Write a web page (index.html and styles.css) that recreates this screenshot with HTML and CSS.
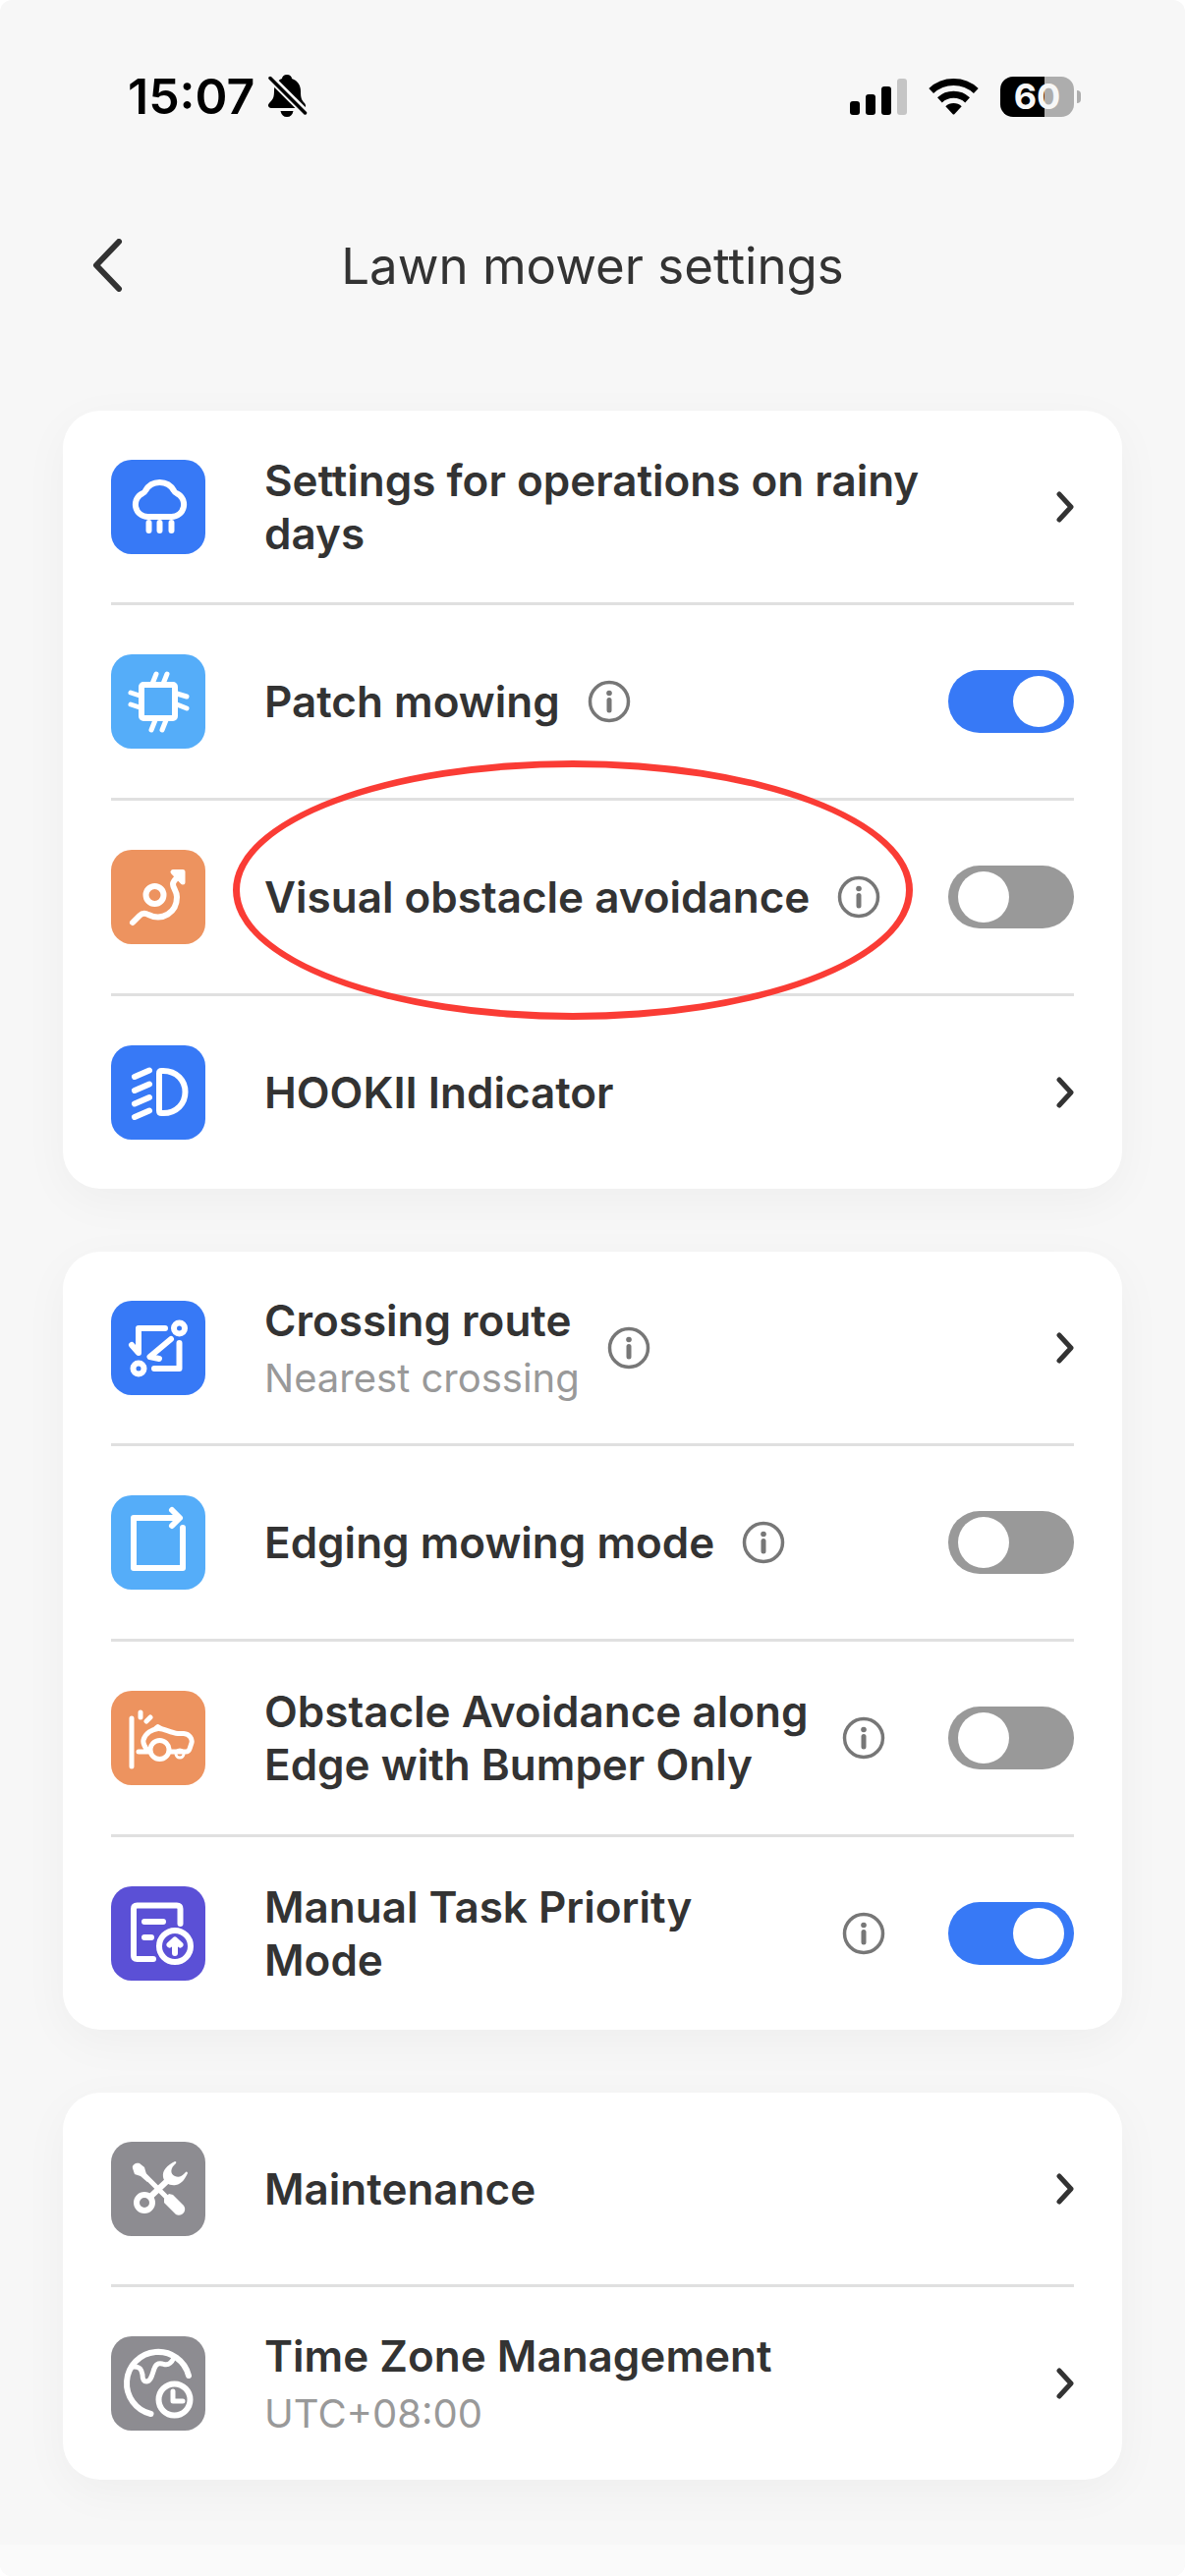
FILE: index.html
```html
<!DOCTYPE html>
<html lang="en">
	<head>
		<meta charset="utf-8">
		<meta name="viewport" content="width=device-width, initial-scale=1">
		<title>Lawn mower settings</title>
		<link rel="stylesheet" href="styles.css">
	</head>
	<body>
		<!-- shared shapes -->
		<svg class="shapes">
			<symbol id="info" viewBox="0 0 44 44">
				<circle cx="22" cy="22" r="19.5" fill="none" stroke="#777" stroke-width="3.5"/>
				<circle cx="22" cy="13.5" r="2.8" fill="#777"/>
				<path d="M22 20.5V31" stroke="#777" stroke-width="5" stroke-linecap="round"/>
			</symbol>
			<symbol id="chevron" viewBox="0 0 18 32">
				<path d="M3 3L15 16L3 29" fill="none" stroke="#333" stroke-width="5" stroke-linecap="round" stroke-linejoin="round"/>
			</symbol>
		</svg>

		<div class="app">
			<div class="status">
				<span class="time">15:07</span>
				<svg class="bell" viewBox="0 0 40 44">
					<path d="M19 0C22 0 24 2 24 4C30 6 33 11 33 17C33 24 34 26 37 29C39 32 38 34 35 34H3C0 34-1 31 1 29C5 25 6 23 6 16C6 10 9 6 14 4C14 2 16 0 19 0Z"/>
					<path d="M12.500 37H25.500C24.500 41 22.500 43 19 43S13.500 41 12.500 37Z"/>
					<path d="M0 1L39 40" stroke="#f7f7f7" stroke-width="8"/>
					<path d="M2 3.500L37.500 39" stroke="#000" stroke-width="3.500" stroke-linecap="round"/>
				</svg>
				<div class="status-right">
					<svg class="signal" viewBox="0 0 58 37">
						<rect x="0" y="23" width="10" height="14" rx="3"/>
						<rect x="16" y="16" width="10" height="21" rx="3"/>
						<rect x="32" y="8" width="10" height="29" rx="3"/>
						<rect x="48" y="0" width="10" height="37" rx="3" fill="#c5c5c5"/>
					</svg>
					<svg class="wifi" viewBox="0 0 51 37">
						<path d="M2.700 12.500A33.500 33.500 0 0 1 48.300 12.500M11.400 21.900A20.700 20.700 0 0 1 39.600 21.900" fill="none" stroke="#000" stroke-width="7"/>
						<path d="M17.300 28.200A12 12 0 0 1 33.700 28.200L26.500 36Q25.500 37 24.500 36Z"/>
					</svg>
					<div class="battery">60</div>
				</div>
			</div>

			<header>
				<button class="back" aria-label="Back">
					<svg viewBox="0 0 32 54"><path d="M27 3L4 27L27 51" fill="none" stroke="#333" stroke-width="6" stroke-linecap="round" stroke-linejoin="round"/></svg>
				</button>
				<h1>Lawn mower settings</h1>
			</header>

			<main>
				<section class="card">
					<a class="row" href="#rain">
						<svg class="icon blue" viewBox="0 0 96 96">
							<path d="M37.500 58A12.500 12.500 0 0 1 32.500 34Q34 33.500 35 31.500C38 26 43 23 49.500 23S61 26 64 31.500Q65 33.500 66.500 34A12.500 12.500 0 0 1 61.500 58Z"/>
							<path d="M38.500 64V72M49.500 64V72M61.500 64V72"/>
						</svg>
						<span class="text"><span class="name">Settings for operations on rainy days</span></span>
						<svg class="chevron"><use href="#chevron"/></svg>
					</a>
					<div class="row">
						<svg class="icon sky" viewBox="0 0 96 96">
							<rect x="31" y="31" width="34" height="34" rx="2"/>
							<path stroke-width="5" d="M46 20L42 30M57 20L53 30M45 67L41 77M56 67L52 77M20 39L29 42M20 51L29 54M67 40L77 43M67 51L77 55"/>
						</svg>
						<div class="text">
							<label class="name" for="patch">Patch mowing</label>
							<button class="info" aria-label="About patch mowing"><svg><use href="#info"/></svg></button>
						</div>
						<input class="toggle" id="patch" type="checkbox" checked>
					</div>
					<div class="row marked">
						<svg class="icon orange" viewBox="0 0 96 96">
							<circle cx="44.500" cy="46" r="9"/>
							<path d="M22 74L29 67Q33 63 38 66C52 73 67 64 67 48C67 42 63 39 63 35C63 31 67 29 71 25"/>
							<path d="M63 22.500H73V33Z" fill="#fff" stroke-width="5"/>
						</svg>
						<div class="text">
							<label class="name" for="visual">Visual obstacle avoidance</label>
							<button class="info" aria-label="About visual obstacle avoidance"><svg><use href="#info"/></svg></button>
						</div>
						<input class="toggle" id="visual" type="checkbox">
					</div>
					<a class="row" href="#indicator">
						<svg class="icon blue" viewBox="0 0 96 96">
							<path d="M39 25.500L24 32M39 39.500L24 46M39 53L24 59.500M39 66.500L24 73"/>
							<path d="M49 28.500Q49 26 51.500 26H53C67 26 75.500 36 75.500 47.500S67 69 53 69H51.500Q49 69 49 66.500Z"/>
						</svg>
						<span class="text"><span class="name">HOOKII Indicator</span></span>
						<svg class="chevron"><use href="#chevron"/></svg>
					</a>
				</section>

				<section class="card">
					<div class="row">
						<svg class="icon blue" viewBox="0 0 96 96">
							<circle cx="69.500" cy="28" r="5.500"/>
							<circle cx="28" cy="69" r="5.500"/>
							<path d="M55 28H28V53L21 45M61 39L39.500 57L49 59M69.500 43V69H44"/>
						</svg>
						<div class="text">
							<span class="name">Crossing route<small>Nearest crossing</small></span>
							<button class="info" aria-label="About crossing route"><svg><use href="#info"/></svg></button>
						</div>
						<a href="#crossing" aria-label="Crossing route"><svg class="chevron"><use href="#chevron"/></svg></a>
					</div>
					<div class="row">
						<svg class="icon sky" viewBox="0 0 96 96">
							<path d="M68 23H23V74H73V33M62 15L70 23L62 31"/>
						</svg>
						<div class="text">
							<label class="name" for="edging">Edging mowing mode</label>
							<button class="info" aria-label="About edging mowing mode"><svg><use href="#info"/></svg></button>
						</div>
						<input class="toggle" id="edging" type="checkbox">
					</div>
					<div class="row">
						<svg class="icon orange" viewBox="0 0 96 96">
							<g stroke-width="5">
								<path d="M21 28V77M30 22V27M40 27L36 31"/>
								<circle cx="49.500" cy="60" r="9.500"/>
								<path d="M28 62H38C35 58 32 54 33 50C35 43 42 39 48 38.500C54 38 60 43 68 43.500H74C80 44 83 49 82 53L80 59Q79 62 76 62H61"/>
							</g>
							<path d="M45 38L47.500 36L51 38" stroke-width="4"/>
							<circle cx="70" cy="64" r="4" stroke-width="3"/>
						</svg>
						<div class="text">
							<label class="name" for="bumper">Obstacle Avoidance along Edge with Bumper Only</label>
							<button class="info" aria-label="About obstacle avoidance along edge"><svg><use href="#info"/></svg></button>
						</div>
						<input class="toggle" id="bumper" type="checkbox">
					</div>
					<div class="row">
						<svg class="icon purple" viewBox="0 0 96 96">
							<path d="M70.500 38V23Q70.500 19.500 67 19.500H26.500Q23 19.500 23 23V70.500Q23 74 26.500 74H43"/>
							<path d="M34 36H53M34 52H41"/>
							<circle cx="65" cy="61" r="16"/>
							<path d="M65 68V55M59.500 59.500L65 54.500L70.500 59.500"/>
						</svg>
						<div class="text">
							<label class="name" for="manual">Manual Task Priority Mode</label>
							<button class="info" aria-label="About manual task priority mode"><svg><use href="#info"/></svg></button>
						</div>
						<input class="toggle" id="manual" type="checkbox" checked>
					</div>
				</section>

				<section class="card">
					<a class="row" href="#maintenance">
						<svg class="icon gray" viewBox="0 0 96 96">
							<circle cx="34" cy="62" r="8"/>
							<path d="M40 56L57 40"/>
							<path d="M32 32L58 58" stroke-width="5"/>
							<g fill="#fff" stroke="none">
								<path d="M65 20C57 24 52 29 53 36C54 42 60 45 66 44C72 43 75 38 78 32C77.500 30 76 30 75 32C72 35 69 37 65 35C60 33 60 27 66 22Q67 20 65 20Z"/>
								<path d="M22 27C21 23 26 21 29 22L34 26L36 33L40 38L37 41L30 35L24 33Z"/>
								<path d="M54 58L59 53L63 54L74 65C78 71 71 77 66 74L54 62Z"/>
							</g>
						</svg>
						<span class="text"><span class="name">Maintenance</span></span>
						<svg class="chevron"><use href="#chevron"/></svg>
					</a>
					<a class="row" href="#timezone">
						<svg class="icon gray" viewBox="0 0 96 96">
							<path d="M79 40A32 32 0 1 0 40.500 79"/>
							<path d="M23 31C30 31 31 34 32 39C32 44 34 46 36 46C41 46 42 38 44 33C46 27 50 27 54 28.500C59 30 62 26 64 22" stroke-width="5"/>
							<circle cx="64.500" cy="64.500" r="16"/>
							<path d="M63 56V66H73" stroke-width="5"/>
						</svg>
						<span class="text"><span class="name">Time Zone Management<small>UTC+08:00</small></span></span>
						<svg class="chevron"><use href="#chevron"/></svg>
					</a>
				</section>
			</main>

			<div class="home-bar"></div>
		</div>
	</body>
</html>
```
FILE: styles.css
```css
*,
*::before,
*::after {
	box-sizing: border-box;
}

body {
	margin: 0;
	background-color: #fff;
	color: #333;
	font-family: Inter, "Liberation Sans", sans-serif;
}

a {
	color: inherit;
	text-decoration: none;
}
button {
	padding: 0;
	border: 0;
	background: none;
	cursor: pointer;
}
svg {
	display: block;
	flex: none;
}
.shapes {
	display: none;
}

.app {
	display: flex;
	flex-direction: column;
	min-height: 100vh;
	border-radius: 12px;
	background-color: #f7f7f7;
	overflow: hidden;
}

/* status bar */
.status {
	display: flex;
	align-items: center;
	height: 196px;
	padding: 0 106px 0 130px;
	color: #000;
}
.time {
	font-size: 50px;
	font-weight: 600;
}
.bell {
	width: 40px;
	height: 44px;
	margin-left: 14px;
}
.status-right {
	display: flex;
	align-items: center;
	gap: 22px;
	margin-left: auto;
}
.signal {
	width: 58px;
	height: 37px;
}
.wifi {
	width: 51px;
	height: 37px;
}
.battery {
	position: relative;
	width: 75px;
	margin-right: 7px;
	border-radius: 13px;
	background: linear-gradient(to right, #000 60%, #adadad 60%);
	color: #f7f7f7;
	font-size: 36px;
	font-weight: 700;
	line-height: 41px;
	text-align: center;
}
.battery::after {
	content: "";
	position: absolute;
	left: 78px;
	top: 14px;
	width: 4px;
	height: 13px;
	border-radius: 0 4px 4px 0;
	background-color: #adadad;
}

/* title */
header {
	display: grid;
	grid-template-columns: 32px 1fr 32px;
	align-items: center;
	height: 148px;
	padding: 0 94px;
}
.back svg {
	width: 32px;
	height: 54px;
}
h1 {
	margin: 0;
	font-size: 51px;
	font-weight: 400;
	text-align: center;
}

/* setting cards */
main {
	display: flex;
	flex-direction: column;
	gap: 64px;
	padding: 74px 64px 64px;
}
.card {
	padding: 0 49px;
	border-radius: 38px;
	background-color: #fff;
	box-shadow: 0 12px 48px rgba(0, 0, 0, 0.04);
}
.row {
	display: flex;
	align-items: center;
	min-height: 195px;
}
.row + .row {
	min-height: 199px;
	border-top: 3px solid #e0e0e0;
}

.icon {
	width: 96px;
	height: 96px;
	margin-right: 60px;
	border-radius: 21px;
	fill: none;
	stroke: #fff;
	stroke-width: 6px;
	stroke-linecap: round;
	stroke-linejoin: round;
}
.blue {
	background-color: #3779f6;
}
.sky {
	background-color: #55adf9;
}
.orange {
	background-color: #ed935f;
}
.purple {
	background-color: #5b50d6;
}
.gray {
	background-color: #8d8c91;
}

.text {
	display: flex;
	flex: 1;
	align-items: center;
	gap: 28px;
	margin-right: 64px;
}
.name {
	font-size: 44px;
	font-weight: 600;
	line-height: 54px;
}
.name small {
	display: block;
	margin-top: 8px;
	color: #999;
	font-size: 40px;
	font-weight: 400;
	line-height: 48px;
}
.info svg {
	width: 44px;
	height: 44px;
}
.chevron {
	width: 18px;
	height: 32px;
}

.toggle {
	flex: none;
	appearance: none;
	width: 128px;
	height: 64px;
	margin: 0;
	padding: 6px 10px;
	border-radius: 32px;
	background-color: #999;
	cursor: pointer;
}
.toggle::before {
	content: "";
	display: block;
	width: 52px;
	height: 52px;
	border-radius: 50%;
	background-color: #fff;
}
.toggle:checked {
	background-color: #3779f6;
}
.toggle:checked::before {
	margin-left: auto;
}

/* hand-drawn ring round one setting */
.marked {
	position: relative;
}
.marked::after {
	content: "";
	position: absolute;
	left: 124px;
	top: -41px;
	width: 692px;
	height: 264px;
	border: 7px solid #fa3c35;
	border-radius: 50%;
	pointer-events: none;
}

.home-bar {
	height: 32px;
	margin-top: auto;
	background-color: #fafafa;
}
```
